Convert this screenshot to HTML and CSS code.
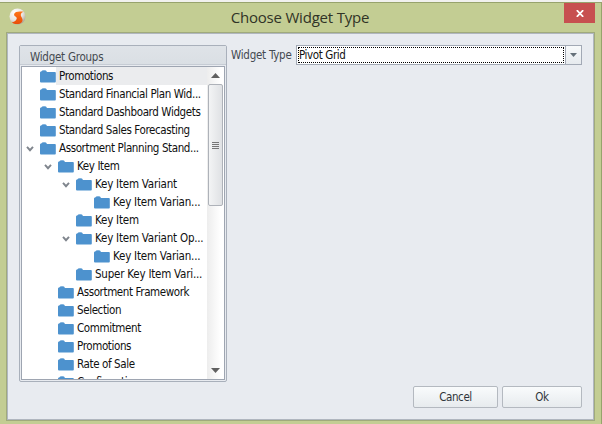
FILE: index.html
```html
<!DOCTYPE html>
<html lang="en">
<head>
<meta charset="utf-8">
<title>Choose Widget Type</title>
<link rel="stylesheet" href="styles.css">
</head>
<body>
<svg class="defs" width="0" height="0">
  <symbol id="folder" viewBox="0 0 16 13"><path d="M0 2.5Q0 1.5 1.2 1.5L2.2.4Q4 0 6 .4L7 2H15Q15.8 2 15.8 3V11.5Q15.8 12.5 15 12.5H1Q0 12.5 0 11.5Z" fill="#4d92ce"/></symbol>
  <symbol id="chevron" viewBox="0 0 8 6"><path d="M1 .8L4 4.2L7 .8" fill="none" stroke="#7f858d" stroke-width="1.9"/></symbol>
</svg>
<div class="window">
  <header class="titlebar">
    <svg class="logo" width="17" height="17" viewBox="0 0 17 17">
      <defs>
        <radialGradient id="ball" cx=".35" cy=".25" r=".8"><stop offset="0" stop-color="#fff"/><stop offset=".6" stop-color="#e8e5e1"/><stop offset="1" stop-color="#aaa294"/></radialGradient>
        <linearGradient id="flame" x2="0" y2="1"><stop offset="0" stop-color="#ff7619"/><stop offset="1" stop-color="#e84d08"/></linearGradient>
      </defs>
      <circle cx="8.5" cy="8.5" r="8" fill="url(#ball)"/>
      <path d="M14.8 3.8C11 3.2 5.6 3.1 5.1 6.2C4.8 8.5 8.3 8.6 7.7 10.7C7 13 5 14 2.8 14.2C5 16.6 10.6 16.9 12.8 14.2C15 11.2 12 9.2 11.8 7.2C11.6 5.5 12.8 4.5 14.8 3.8Z" fill="url(#flame)"/>
    </svg>
    <h1 class="title">Choose Widget Type</h1>
    <button class="close" aria-label="Close"><svg width="8" height="7" viewBox="0 0 8 7"><path d="M.8.2L7.2 6.8M7.2.2L.8 6.8" stroke="#fff" stroke-width="1.8"/></svg></button>
  </header>
  <main class="content">
    <div class="panels">
      <section class="group">
        <h2 class="group-title">Widget Groups</h2>
        <div class="tree">
          <ul class="rows">
            <li class="row l0 selected"><i class="toggle"></i><svg class="folder"><use href="#folder"/></svg><span class="name">Promotions</span></li>
            <li class="row l0"><i class="toggle"></i><svg class="folder"><use href="#folder"/></svg><span class="name">Standard Financial Plan Wid...</span></li>
            <li class="row l0"><i class="toggle"></i><svg class="folder"><use href="#folder"/></svg><span class="name">Standard Dashboard Widgets</span></li>
            <li class="row l0"><i class="toggle"></i><svg class="folder"><use href="#folder"/></svg><span class="name">Standard Sales Forecasting</span></li>
            <li class="row l0"><svg class="toggle"><use href="#chevron"/></svg><svg class="folder"><use href="#folder"/></svg><span class="name">Assortment Planning Stand...</span></li>
            <li class="row l1"><svg class="toggle"><use href="#chevron"/></svg><svg class="folder"><use href="#folder"/></svg><span class="name">Key Item</span></li>
            <li class="row l2"><svg class="toggle"><use href="#chevron"/></svg><svg class="folder"><use href="#folder"/></svg><span class="name">Key Item Variant</span></li>
            <li class="row l3"><i class="toggle"></i><svg class="folder"><use href="#folder"/></svg><span class="name">Key Item Varian...</span></li>
            <li class="row l2"><i class="toggle"></i><svg class="folder"><use href="#folder"/></svg><span class="name">Key Item</span></li>
            <li class="row l2"><svg class="toggle"><use href="#chevron"/></svg><svg class="folder"><use href="#folder"/></svg><span class="name">Key Item Variant Op...</span></li>
            <li class="row l3"><i class="toggle"></i><svg class="folder"><use href="#folder"/></svg><span class="name">Key Item Varian...</span></li>
            <li class="row l2"><i class="toggle"></i><svg class="folder"><use href="#folder"/></svg><span class="name">Super Key Item Vari...</span></li>
            <li class="row l1"><i class="toggle"></i><svg class="folder"><use href="#folder"/></svg><span class="name">Assortment Framework</span></li>
            <li class="row l1"><i class="toggle"></i><svg class="folder"><use href="#folder"/></svg><span class="name">Selection</span></li>
            <li class="row l1"><i class="toggle"></i><svg class="folder"><use href="#folder"/></svg><span class="name">Commitment</span></li>
            <li class="row l1"><i class="toggle"></i><svg class="folder"><use href="#folder"/></svg><span class="name">Promotions</span></li>
            <li class="row l1"><i class="toggle"></i><svg class="folder"><use href="#folder"/></svg><span class="name">Rate of Sale</span></li>
            <li class="row l1"><i class="toggle"></i><svg class="folder"><use href="#folder"/></svg><span class="name">Confirmation</span></li>
          </ul>
          <div class="scrollbar">
            <div class="arrow"><svg width="9" height="5" viewBox="0 0 9 5"><path d="M0 5L4.5 0L9 5Z" fill="#606060"/></svg></div>
            <div class="thumb"><i class="grip"></i></div>
            <div class="arrow down"><svg width="9" height="5" viewBox="0 0 9 5"><path d="M0 0L4.5 5L9 0Z" fill="#606060"/></svg></div>
          </div>
        </div>
      </section>
      <div class="field">
        <span class="label">Widget Type</span>
        <div class="combo">
          <div class="value"><span>Pivot Grid</span></div>
          <div class="drop"><svg width="7" height="4" viewBox="0 0 7 4"><path d="M0 0H7L3.5 4Z" fill="#66717a"/></svg></div>
        </div>
      </div>
    </div>
    <footer class="actions">
      <button class="btn cancel">Cancel</button>
      <button class="btn ok">Ok</button>
    </footer>
  </main>
</div>
</body>
</html>
```
FILE: styles.css
```css
* { box-sizing: border-box; }
body {
  margin: 0;
  width: 602px;
  height: 424px;
  overflow: hidden;
  background: #f1f1ee;
  font: 11.5px/18px "DejaVu Sans Condensed", "DejaVu Sans", sans-serif;
  font-stretch: condensed;
  letter-spacing: -0.39px;
  color: #101010;
}
.defs { position: absolute; }
h1, h2, ul { margin: 0; padding: 0; font-weight: normal; }
button { font: inherit; letter-spacing: inherit; padding: 0; }
.window {
  height: 422px;
  margin-top: 2px;
  padding: 0 6px 3px;
  border-top: 1px solid #97a36c;
  border-right: 1px solid #97a36c;
  background: #c3cd93;
  display: flex;
  flex-direction: column;
}
.titlebar { height: 29px; flex: none; display: flex; align-items: flex-start; }
.logo { margin: 5px 0 0 3px; flex: none; }
.title {
  flex: 1;
  padding-left: 10px;
  text-align: center;
  font: 15px/20px "Open Sans", "Noto Sans", sans-serif;
  letter-spacing: -0.2px;
  margin-top: 4px;
  color: #303326;
}
.close {
  width: 31px;
  height: 20px;
  border: 0;
  background: #c75050;
  display: flex;
  align-items: center;
  justify-content: center;
}
.content {
  flex: 1;
  min-height: 0;
  border: 1px solid #a0aa7c;
  box-shadow: inset 0 0 0 1px #b0b6bf;
  background: #e8ebf0;
  padding: 12px 12px 0;
}
.panels { display: flex; height: 337px; }
.group {
  width: 208px;
  border: 1px solid #a9b0bb;
  border-radius: 2px;
  background: #e8ebf0;
  padding: 0 1px 1px;
  display: flex;
  flex-direction: column;
}
.group-title {
  height: 19px;
  margin: 0 -1px 1px;
  padding: 2px 0 0 10px;
  background: linear-gradient(#dfe3e8, #dadfe4);
  border-bottom: 1px solid #c6ccd4;
  font-size: inherit;
  line-height: 18px;
  letter-spacing: -0.25px;
  color: #444950;
}
.tree {
  flex: 1;
  min-height: 0;
  border: 1px solid #9ea5b1;
  background: #fff;
  display: flex;
  overflow: hidden;
}
.rows { flex: 1; min-width: 0; list-style: none; }
.row { display: flex; align-items: center; height: 18px; }
.l1 { padding-left: 18px; }
.l2 { padding-left: 36px; }
.l3 { padding-left: 54px; }
.l2, .l3 { letter-spacing: -0.22px; }
.toggle { width: 8px; height: 6px; margin: 2px 6px 0 4px; flex: none; }
.folder { width: 16px; height: 13px; flex: none; }
.name { flex: 1; padding-left: 3px; white-space: nowrap; }
.selected .name { background: #ebecee; }
.scrollbar {
  width: 17px;
  flex: none;
  background: linear-gradient(90deg, #ededed, #fff 80%);
  display: flex;
  flex-direction: column;
  align-items: center;
}
.arrow { height: 17px; display: flex; align-items: center; flex: none; }
.down { margin-top: auto; }
.thumb {
  width: 15px;
  height: 122px;
  border: 1px solid #aeb2b9;
  border-radius: 2px;
  background: linear-gradient(90deg, #f3f4f5, #dfe1e4);
  display: flex;
  align-items: center;
  justify-content: center;
}
.grip { width: 7px; height: 7px; background: repeating-linear-gradient(#777 0 1px, transparent 1px 2px); }
.field { display: flex; align-items: flex-start; margin-left: 4px; flex: 1; }
.label { width: 65px; padding-top: 1px; color: #444950; white-space: nowrap; letter-spacing: -0.25px; }
.combo { width: 286px; height: 20px; border: 1px solid #a2a9b5; background: #fff; display: flex; }
.value { flex: 1; height: 16px; margin: 1px; border: 1px dotted #000; line-height: 15px; }
.drop {
  width: 16px;
  border-left: 1px solid #a2a9b5;
  background: linear-gradient(#f8fafb, #e6eaee);
  display: flex;
  align-items: center;
  justify-content: center;
}
.actions { display: flex; gap: 4px; justify-content: flex-end; margin-top: 4px; }
.btn {
  height: 22px;
  border: 1px solid #b4b9c0;
  border-radius: 2px;
  background: linear-gradient(#f9fbfc, #e7ebee);
  color: #30343a;
}
.cancel { width: 85px; }
.ok { width: 80px; }
```
